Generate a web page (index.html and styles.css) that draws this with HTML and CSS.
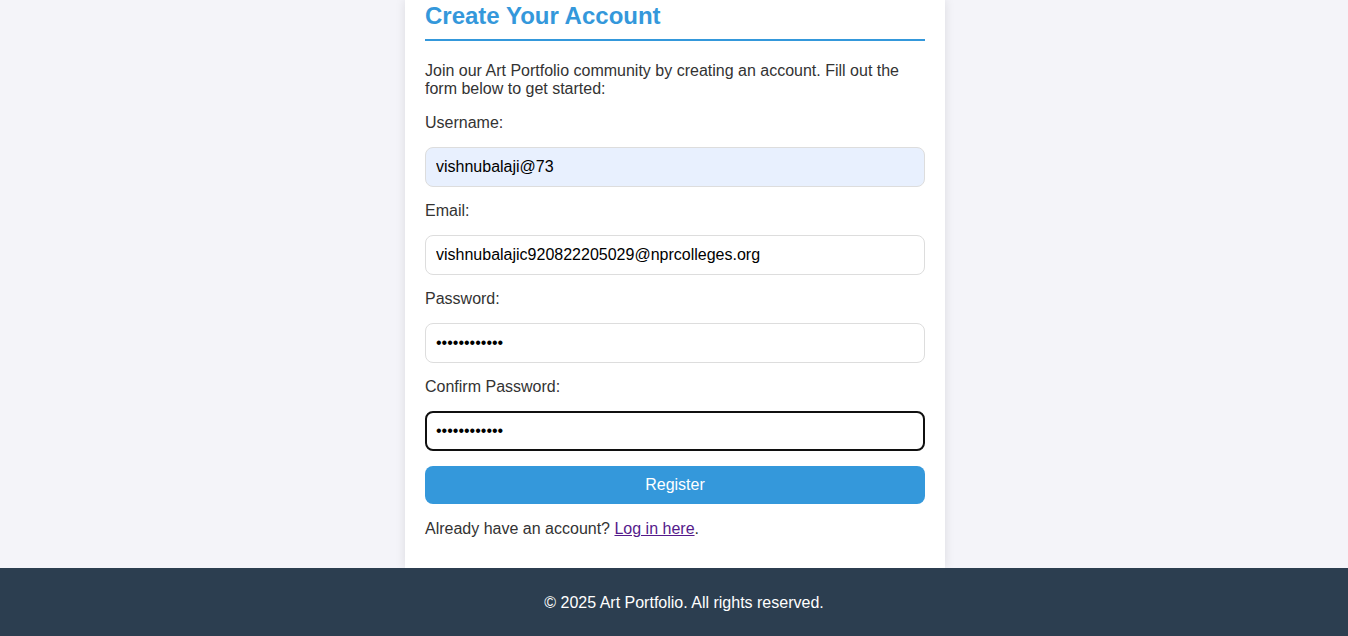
FILE: index.html
```html
<!DOCTYPE html>
<html lang="en">
<head>
<meta charset="utf-8">
<title>Register - Art Portfolio</title>
<link rel="stylesheet" href="styles.css">
</head>
<body>
<main class="page">
  <section class="card">
    <h2 class="title">Create Your Account</h2>
    <p class="intro">Join our Art Portfolio community by creating an account. Fill out the form below to get started:</p>
    <form class="form">
      <label class="label" for="username">Username:</label>
      <input class="field field-autofill" id="username" type="text" value="vishnubalaji@73">
      <label class="label" for="email">Email:</label>
      <input class="field" id="email" type="email" value="vishnubalajic920822205029@nprcolleges.org">
      <label class="label" for="password">Password:</label>
      <input class="field" id="password" type="password" value="vishnu@12345">
      <label class="label" for="confirm">Confirm Password:</label>
      <input class="field field-focus" id="confirm" type="password" value="vishnu@12345">
      <button class="btn" type="button">Register</button>
    </form>
    <p class="login">Already have an account? <a class="link" href="#">Log in here</a>.</p>
  </section>
</main>
<footer class="footer">
  <p class="footer-text">© 2025 Art Portfolio. All rights reserved.</p>
</footer>
</body>
</html>
```
FILE: styles.css
```css
html, body {
  margin: 0;
  padding: 0;
}
body {
  background: #f4f4f9;
  font-family: "Liberation Sans", Arial, sans-serif;
  font-size: 16px;
  color: #333;
  min-height: 636px;
  display: flex;
  flex-direction: column;
}
.page {
  flex: 1;
  display: flex;
  justify-content: center;
  padding-left: 2px;
}
.card {
  width: 500px;
  background: #fff;
  padding: 2px 20px 28px;
  box-shadow: 0 0 10px rgba(0, 0, 0, 0.1);
}
.title {
  margin: 0 0 21px;
  font-size: 24px;
  color: #3498db;
  padding-bottom: 10px;
  border-bottom: 2px solid #3498db;
  line-height: 27px;
}
.intro {
  margin: 0 0 16px;
  line-height: 18px;
}
.form {
  display: flex;
  flex-direction: column;
}
.label {
  line-height: 18px;
  margin-bottom: 15px;
}
.field {
  box-sizing: border-box;
  height: 40px;
  padding: 10px;
  border: 1px solid #ddd;
  border-radius: 8px;
  font-family: "Liberation Sans", Arial, sans-serif;
  font-size: 16px;
  color: #000;
  margin: 0 0 15px;
  background: #fff;
  outline: none;
}
.field-autofill {
  background: #e8f0fe;
}
.field-focus {
  border: 2px solid #101010;
  padding: 9px;
}
.btn {
  margin-top: 0;
  height: 38px;
  border: none;
  border-radius: 8px;
  background: #3498db;
  color: #fff;
  font-family: "Liberation Sans", Arial, sans-serif;
  font-size: 16px;
}
.login {
  margin: 16px 0 0;
  line-height: 18px;
}
.link {
  color: #551a8b;
}
.footer {
  background: #2c3e50;
  color: #fff;
  text-align: center;
  padding: 26px 0 24px 20px;
}
.footer-text {
  margin: 0;
  line-height: 18px;
}
```
